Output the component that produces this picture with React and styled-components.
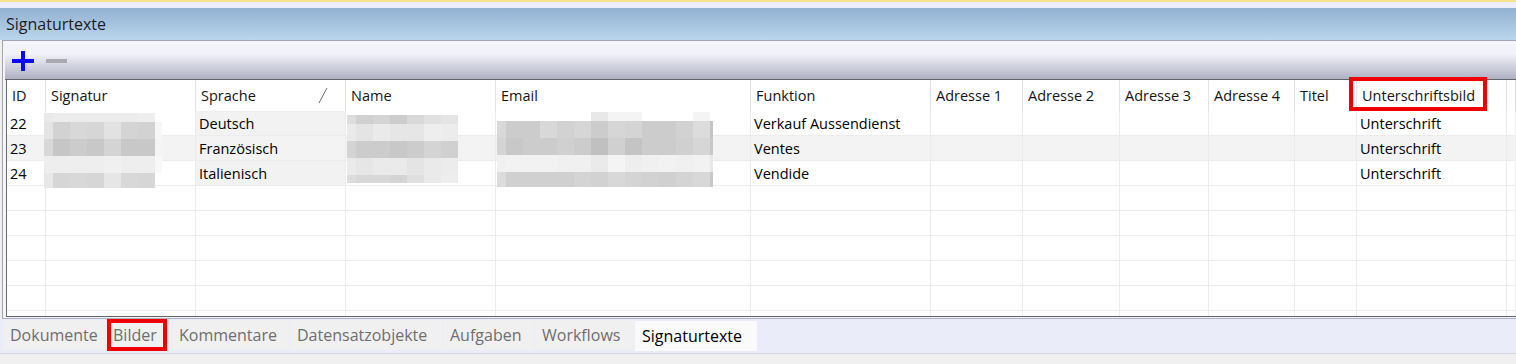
import React from 'react';
import styled, { createGlobalStyle } from 'styled-components';

const Global = createGlobalStyle`
  html, body { margin: 0; padding: 0; background: #f0f0f0; }
  body { font-family: "Open Sans", "Liberation Sans", sans-serif; }
`;

const COLS = '39px 150px 150px 150px 255px 180px 92px 97px 89px 86px 62px 150px 1fr';

const Page = styled.div`
  width: 1516px;
  height: 364px;
  overflow: hidden;
  background: #f0f0f0;
  display: flex;
  flex-direction: column;
`;

const TopStrip = styled.div`
  height: 6px;
  border-top: 2px solid #f6e38e;
  background: #eceefa;
`;

const TitleBar = styled.div`
  height: 32px;
  display: flex;
  align-items: center;
  padding-left: 6px;
  background: linear-gradient(#92b1d2, #bad5ec);
  font-size: 16px;
  color: #1c1c1c;
`;

const Panel = styled.div`
  margin-left: 2px;
  border-left: 1px solid #a4a4a8;
  border-top: 1px solid #a2a2b4;
  border-bottom: 1px solid #aeaebe;
  padding: 2px 0 1px 2px;
  background: #f4f5fc;
`;

const Toolbar = styled.div`
  box-sizing: border-box;
  height: 37px;
  display: flex;
  align-items: center;
  gap: 12px;
  padding-left: 7px;
  border-bottom: 1px solid #646468;
  background: linear-gradient(#f4f5fc 0%, #f1f2fa 30%, #b0b0c4 100%);
`;

const GridFrame = styled.div`
  margin-left: 1px;
  border-left: 1px solid #6a6a6e;
  border-bottom: 1px solid #646468;
  background: #fff;
`;

const HeaderRow = styled.div`
  display: grid;
  grid-template-columns: ${COLS};
  height: 31px;
  background: #fff;
`;

const HeadCell = styled.div`
  position: relative;
  box-sizing: border-box;
  display: flex;
  align-items: center;
  padding-left: 5px;
  border-right: 1px solid #e3e3e3;
  font-size: 14.5px;
  color: #141414;
  white-space: nowrap;
`;

const SortMark = styled.svg`
  position: absolute;
  right: 17px;
  top: 7px;
`;

const Highlight = styled.div`
  position: absolute;
  left: ${p => p.$l}px;
  top: ${p => p.$t}px;
  width: ${p => p.$w}px;
  height: ${p => p.$h}px;
  box-sizing: border-box;
  border: 4px solid #f00000;
  pointer-events: none;
`;

const Body = styled.div`
  position: relative;
  height: 205px;
  overflow: hidden;
`;

const Row = styled.div`
  display: grid;
  grid-template-columns: ${COLS};
  height: 25px;
  background: ${p => (p.$alt ? '#f3f3f3' : '#fff')};
`;

const Cell = styled.div`
  box-sizing: border-box;
  display: flex;
  align-items: center;
  padding-left: 3px;
  border-right: 1px solid #ececec;
  border-bottom: 1px solid #ececec;
  font-size: 14.5px;
  color: #000;
  white-space: nowrap;
  background: ${p => (p.$shade ? '#f2f2f2' : 'transparent')};
`;

const Redaction = styled.div`
  position: absolute;
  left: ${p => p.$x}px;
  top: ${p => p.$y}px;
  display: grid;
  grid-template-columns: ${p => p.$cols};
  grid-template-rows: ${p => p.$rows};
`;

const Block = styled.div`
  background: ${p => (p.$c ? '#' + p.$c + p.$c + p.$c : 'transparent')};
`;

const TabStrip = styled.div`
  height: 33px;
  padding: 1px 0 0 3px;
  box-sizing: border-box;
  display: flex;
  align-items: flex-start;
  gap: 1px;
  background: #ebecfa;
  border-bottom: 1px solid #d6d6e2;
  height: 35px;
`;

const Tab = styled.div`
  position: relative;
  box-sizing: border-box;
  width: ${p => p.$w}px;
  height: 30px;
  display: flex;
  align-items: center;
  padding-left: 7px;
  font-size: 16px;
  color: ${p => (p.$active ? '#000' : '#6e6e6e')};
  background: ${p => (p.$active ? '#fafafa' : '#f0f0f0')};
  margin-top: ${p => (p.$active ? '1px' : '0')};
  white-space: nowrap;
`;

const headers = ['ID', 'Signatur', 'Sprache', 'Name', 'Email', 'Funktion', 'Adresse 1', 'Adresse 2', 'Adresse 3', 'Adresse 4', 'Titel', 'Unterschriftsbild', ''];

const data = [
  { id: '22', sprache: 'Deutsch', funktion: 'Verkauf Aussendienst', bild: 'Unterschrift' },
  { id: '23', sprache: 'Französisch', funktion: 'Ventes', bild: 'Unterschrift' },
  { id: '24', sprache: 'Italienisch', funktion: 'Vendide', bild: 'Unterschrift' },
];

const redactions = [
  {
    x: 37, y: 2, cols: '9px repeat(6, 17px) 7px', rows: '9px 17px 17px 17px 15px',
    m: [
      ['e9', 'ec', 'ec', 'ec', 'ec', 'ec', 'ee', null],
      ['e4', 'd2', 'd8', 'd6', 'e2', 'd4', 'd2', 'f6'],
      ['d8', 'c6', 'cc', 'c8', 'd4', 'c8', 'c8', 'f4'],
      ['ee', 'ee', 'ee', 'ee', 'f0', 'ee', 'ee', 'f8'],
      ['e8', 'd6', 'd8', 'd6', 'e6', 'd8', 'd6', null],
    ],
  },
  {
    x: 340, y: 4, cols: '9px repeat(6, 17px)', rows: '9px 17px 17px 17px 8px',
    m: [
      ['dd', 'd0', 'd4', 'cc', 'd8', 'e0', 'e4'],
      ['ea', 'e4', 'ea', 'e6', 'e6', 'ee', 'ec'],
      ['d4', 'cc', 'cc', 'c8', 'cc', 'd4', 'd0'],
      ['ea', 'e6', 'ea', 'ea', 'e4', 'ea', 'ec'],
      ['dc', 'd8', 'd8', 'd4', 'e0', 'ea', 'ee'],
    ],
  },
  {
    x: 490, y: 1, cols: '9px repeat(12, 17px) 3px', rows: '9px 17px 17px 17px 15px',
    m: [
      [null, null, null, null, null, null, 'e8', 'f4', 'f4', null, null, null, 'f4', null],
      ['d8', 'cc', 'cc', 'd8', 'd2', 'd6', 'cc', 'd6', 'd4', 'cc', 'cc', 'd2', 'dc', 'c4'],
      ['d4', 'c8', 'cc', 'cc', 'd0', 'cc', 'c0', 'd0', 'c4', 'cc', 'cc', 'd0', 'd6', 'c8'],
      ['f0', 'f2', 'f2', 'f2', 'f0', 'f0', 'ea', 'f4', 'ee', 'f0', 'f2', 'f0', 'f2', 'e8'],
      ['dc', 'd0', 'd0', 'd0', 'd0', 'd4', 'd2', 'd8', 'd4', 'd2', 'd0', 'd4', 'd8', 'c8'],
    ],
  },
];

const tabs = [
  { label: 'Dokumente', w: 102 },
  { label: 'Bilder', w: 65, mark: true },
  { label: 'Kommentare', w: 117 },
  { label: 'Datensatzobjekte', w: 152 },
  { label: 'Aufgaben', w: 91 },
  { label: 'Workflows', w: 99 },
  { label: 'Signaturtexte', w: 122, active: true },
];

function rowCells(r) {
  return [
    r ? r.id : '', '', r ? r.sprache : '', '', '', r ? r.funktion : '',
    '', '', '', '', '', r ? r.bild : '', '',
  ];
}

export default function App() {
  const rows = Array.from({ length: 9 }, (_, i) => data[i] || null);
  return (
    <Page>
      <Global />
      <TopStrip />
      <TitleBar>Signaturtexte</TitleBar>
      <Panel>
        <Toolbar>
          <svg width="22" height="20" viewBox="0 0 22 20">
            <rect x="0" y="8" width="22" height="4" fill="#0a0aff" />
            <rect x="9" y="0" width="4" height="20" fill="#0a0aff" />
          </svg>
          <svg width="21" height="4" viewBox="0 0 21 4">
            <rect x="0" y="0" width="21" height="4" fill="#a9a9b2" />
          </svg>
        </Toolbar>
        <GridFrame>
          <HeaderRow>
            {headers.map((h, i) => (
              <HeadCell key={i}>
                {h}
                {h === 'Sprache' && (
                  <SortMark width="10" height="17" viewBox="0 0 10 17">
                    <line x1="9" y1="1" x2="1" y2="16" stroke="#6a6a6a" strokeWidth="1" />
                  </SortMark>
                )}
                {h === 'Unterschriftsbild' && <Highlight $l={-8} $t={-3} $w={138} $h={34} />}
              </HeadCell>
            ))}
          </HeaderRow>
          <Body>
            {rows.map((r, i) => (
              <Row key={i} $alt={i === 1}>
                {rowCells(r).map((c, j) => (
                  <Cell key={j} $shade={j === 2 && r && i !== 1}>{c}</Cell>
                ))}
              </Row>
            ))}
            {redactions.map((rd, k) => (
              <Redaction key={k} $x={rd.x} $y={rd.y} $cols={rd.cols} $rows={rd.rows}>
                {rd.m.flat().map((c, j) => (
                  <Block key={j} $c={c} />
                ))}
              </Redaction>
            ))}
          </Body>
        </GridFrame>
      </Panel>
      <TabStrip>
        {tabs.map(t => (
          <Tab key={t.label} $w={t.w} $active={t.active}>
            {t.label}
            {t.mark && <Highlight $l={1} $t={-1} $w={60} $h={32} />}
          </Tab>
        ))}
      </TabStrip>
    </Page>
  );
}
